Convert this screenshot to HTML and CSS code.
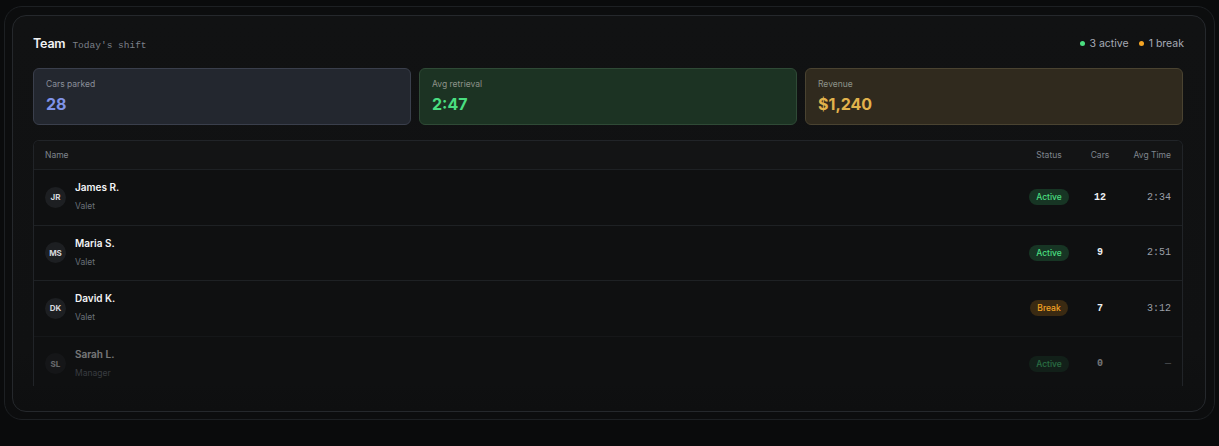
FILE: index.html
```html
<!DOCTYPE html>
<html>
<head>
<meta charset="utf-8">
<link rel="stylesheet" href="styles.css">
</head>
<body>
<div class="frame">
  <div class="card">
    <div class="header">
      <div class="title"><span class="team">Team</span><span class="sub">Today's shift</span></div>
      <div class="legend">
        <span class="leg"><span class="dot green"></span>3 active</span>
        <span class="leg"><span class="dot amber"></span>1 break</span>
      </div>
    </div>
    <div class="stats">
      <div class="stat blue"><div class="label">Cars parked</div><div class="value">28</div></div>
      <div class="stat green"><div class="label">Avg retrieval</div><div class="value">2:47</div></div>
      <div class="stat amber"><div class="label">Revenue</div><div class="value">$1,240</div></div>
    </div>
    <div class="table">
      <div class="row head">
        <div class="c-name">Name</div>
        <div class="c-status">Status</div>
        <div class="c-cars">Cars</div>
        <div class="c-time">Avg Time</div>
      </div>
      <div class="row">
        <div class="c-name"><span class="avatar">JR</span><div class="who"><div class="nm">James R.</div><div class="role">Valet</div></div></div>
        <div class="c-status"><span class="badge active">Active</span></div>
        <div class="c-cars num">12</div>
        <div class="c-time mono">2:34</div>
      </div>
      <div class="row">
        <div class="c-name"><span class="avatar">MS</span><div class="who"><div class="nm">Maria S.</div><div class="role">Valet</div></div></div>
        <div class="c-status"><span class="badge active">Active</span></div>
        <div class="c-cars num">9</div>
        <div class="c-time mono">2:51</div>
      </div>
      <div class="row">
        <div class="c-name"><span class="avatar">DK</span><div class="who"><div class="nm">David K.</div><div class="role">Valet</div></div></div>
        <div class="c-status"><span class="badge brk">Break</span></div>
        <div class="c-cars num">7</div>
        <div class="c-time mono">3:12</div>
      </div>
      <div class="row dim">
        <div class="c-name"><span class="avatar">SL</span><div class="who"><div class="nm">Sarah L.</div><div class="role">Manager</div></div></div>
        <div class="c-status"><span class="badge active">Active</span></div>
        <div class="c-cars num">0</div>
        <div class="c-time mono">—</div>
      </div>
    </div>
  </div>
</div>
</body>
</html>
```
FILE: styles.css
```css
* { box-sizing: border-box; }
html, body { margin: 0; padding: 0; }
body {
  background: #0a0b0c;
  font-family: Inter, "Noto Sans", sans-serif;
  color: #e6e7ea;
  width: 1219px;
  height: 446px;
  overflow: hidden;
}
.frame {
  margin: 6px 4px 0 4px;
  height: 414px;
  border: 1px solid #1d2023;
  border-radius: 18px;
  padding: 8px 8px 7px 7px;
  background: #0c0d0e;
}
.card {
  height: 397px;
  border: 1px solid #25282c;
  border-radius: 14px;
  background: linear-gradient(#111213, #101112 85%, #0e0f10);
  padding: 18px 22px 0 20px;
  overflow: hidden;
}
.header {
  display: flex;
  justify-content: space-between;
  align-items: center;
  height: 18px;
  margin-bottom: 16px;
}
.title { display: flex; align-items: baseline; gap: 7px; }
.team { font-size: 12.5px; font-weight: 600; color: #f2f3f5; letter-spacing: -0.2px; }
.sub { font-family: "Liberation Mono", monospace; font-size: 9.5px; color: #7c8089; }
.legend { display: flex; gap: 10px; font-size: 10.5px; color: #a6abb5; margin-right: -1px; }
.leg { display: flex; align-items: center; gap: 5px; }
.dot { width: 5px; height: 5px; border-radius: 50%; display: inline-block; }
.dot.green { background: #4ade80; }
.dot.amber { background: #f5a524; }

.stats { display: grid; grid-template-columns: 1fr 1fr 1fr; gap: 8px; margin-bottom: 15px; }
.stat {
  height: 57px;
  border-radius: 6px;
  padding: 9px 12px;
  border: 1px solid;
}
.stat .label { font-size: 8.5px; color: #8a8f99; line-height: 12px; }
.stat .value { font-size: 16px; font-weight: 700; line-height: 20px; margin-top: 4px; }
.stat.blue { background: #23272f; border-color: #3a3f4c; }
.stat.blue .value { color: #7f93e8; }
.stat.green { background: #1c3323; border-color: #2f4a36; }
.stat.green .value { color: #4ade80; }
.stat.amber { background: #302a1e; border-color: #4a4331; }
.stat.amber .value { color: #e2b24c; }
.stat.green .label, .stat.amber .label { color: #8d9289; }

.table {
  border: 1px solid #212428;
  border-bottom: none;
  border-radius: 6px 6px 0 0;
  height: 246px;
  overflow: hidden;
  background: #0f1011;
}
.row {
  display: flex;
  align-items: center;
  height: 55.5px;
  border-top: 1px solid #1e2124;
  padding: 0 11px 0 11px;
}
.row.head {
  height: 28px;
  border-top: none;
  background: #131415;
  font-size: 8.5px;
  color: #7f848d;
}
.c-name { flex: 1; display: flex; align-items: center; gap: 9px; }
.c-status { width: 60px; text-align: center; display: flex; justify-content: center; }
.c-cars { width: 42px; text-align: center; }
.c-time { width: 50px; text-align: right; }
.avatar {
  width: 21px; height: 21px; border-radius: 50%;
  background: #1d1f22;
  color: #d5d7dc;
  font-size: 8px; font-weight: 700;
  display: flex; align-items: center; justify-content: center;
}
.who { display: flex; flex-direction: column; gap: 8px; margin-top: -2px; }
.nm { font-size: 10px; font-weight: 600; color: #f3f4f6; line-height: 12px; }
.role { font-size: 8.5px; color: #6b707a; line-height: 10px; }
.badge {
  font-size: 8.5px; font-weight: 500;
  padding: 0 7px; height: 16px; line-height: 16px;
  border-radius: 8px;
}
.badge.active { background: #173524; color: #4ade80; }
.badge.brk { background: #3a2a12; color: #f5a524; }
.num { font-family: "Liberation Mono", monospace; font-weight: 700; font-size: 10px; color: #eef0f3; }
.mono { font-family: "Liberation Mono", monospace; font-size: 10px; color: #9a9ea6; }
.row.dim { opacity: 0.45; }
```
